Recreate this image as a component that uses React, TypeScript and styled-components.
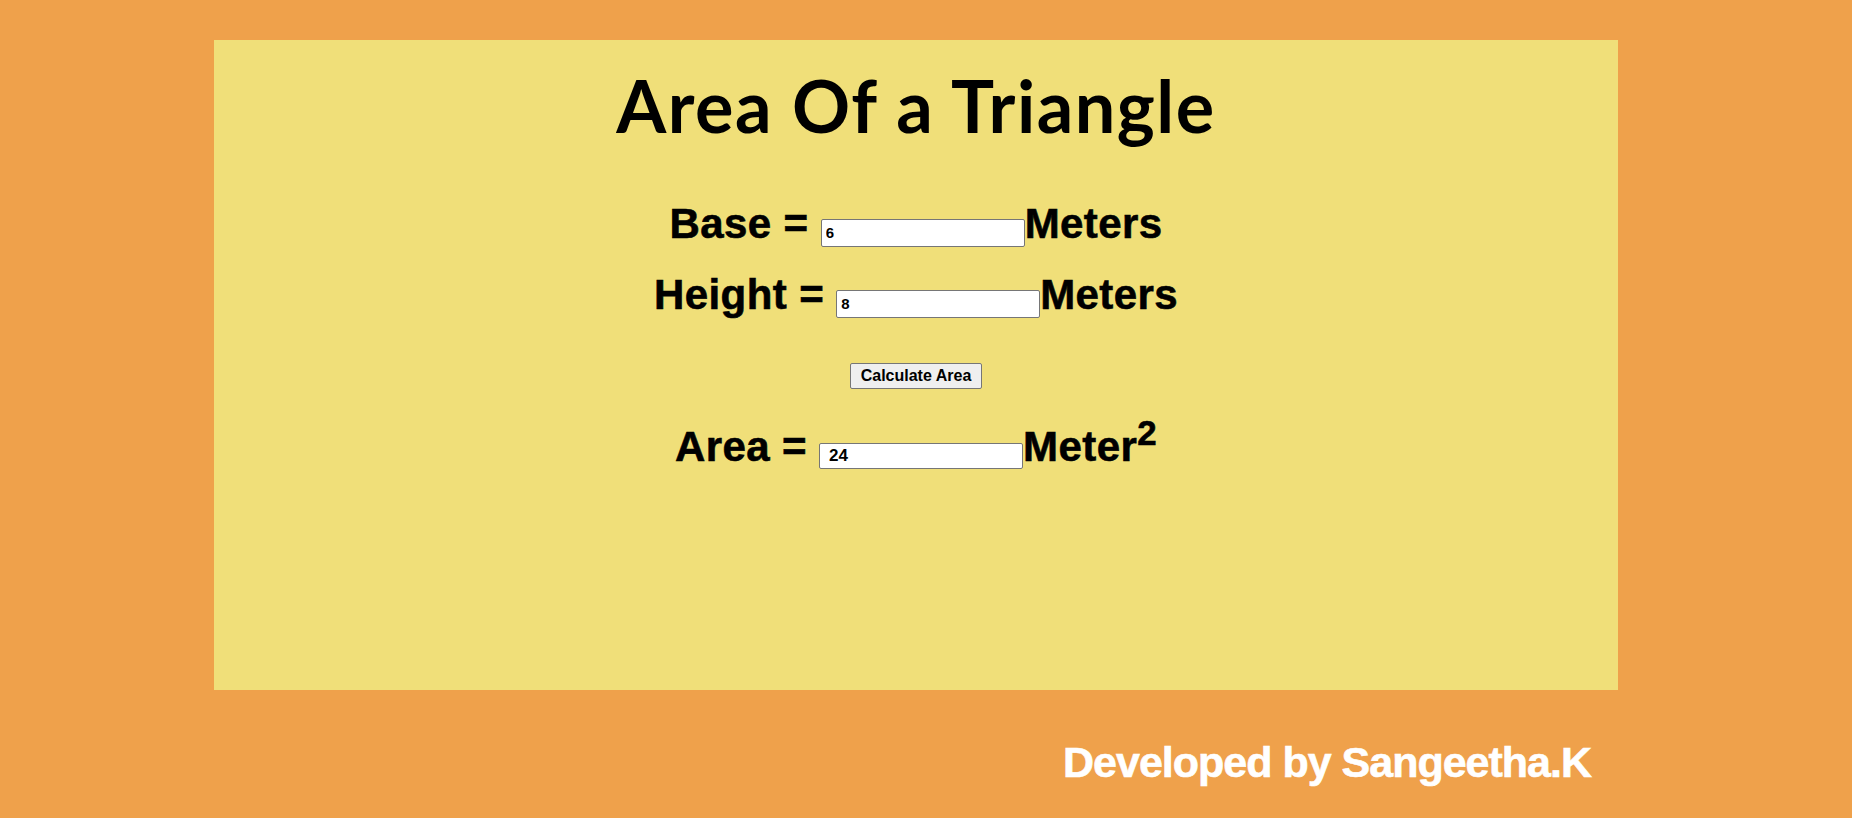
import React from "react";
import styled, { createGlobalStyle } from "styled-components";

const GlobalStyle = createGlobalStyle`
  html, body {
    margin: 0;
    padding: 0;
    background: #efa14b;
  }
  body {
    width: 1852px;
    height: 818px;
    overflow: hidden;
  }
`;

const Page = styled.div`
  box-sizing: border-box;
  height: 818px;
  padding: 40px 234px 0 214px;
  background: #efa14b;
  display: flex;
  flex-direction: column;
`;

const Panel = styled.main`
  box-sizing: border-box;
  height: 650px;
  padding-top: 22px;
  background: #f0df79;
  text-align: center;
  color: #000;
`;

const Title = styled.h1`
  margin: 0 0 52px;
  font-family: "Lato", "Open Sans", sans-serif;
  font-weight: 700;
  font-size: 72px;
  line-height: 86px;
  letter-spacing: 1.5px;
`;

const Row = styled.div<{ $gap: number }>`
  margin: 0 0 ${(p) => p.$gap}px;
  font-family: "Liberation Sans", Arial, sans-serif;
  font-weight: 700;
  font-size: 42px;
  line-height: 48px;
  letter-spacing: 0.4px;
  -webkit-text-stroke: 0.6px #000;
  white-space: nowrap;
`;

const Field = styled.input<{ $size: number; $pad: number; $h: number }>`
  box-sizing: border-box;
  width: 204px;
  height: ${(p) => p.$h}px;
  padding: 0 2px 0 ${(p) => p.$pad}px;
  margin: 0;
  border: 1px solid #767676;
  border-radius: 2px;
  background: #fff;
  color: #000;
  font-family: "Liberation Sans", Arial, sans-serif;
  font-weight: 700;
  font-size: ${(p) => p.$size}px;
  letter-spacing: 0;
  -webkit-text-stroke: 0;
  vertical-align: baseline;
  outline: none;
`;

const Button = styled.button`
  display: block;
  box-sizing: border-box;
  height: 26px;
  margin: 44px auto 34px;
  padding: 0 10px;
  border: 1px solid #767676;
  border-radius: 2px;
  background: #efefef;
  color: #000;
  font-family: "Liberation Sans", Arial, sans-serif;
  font-weight: 700;
  font-size: 16px;
  line-height: 24px;
  cursor: pointer;
`;

const Sup = styled.sup`
  font-size: 0.83em;
  line-height: 0;
  vertical-align: 16px;
`;

const Footer = styled.footer`
  margin-top: 49px;
  padding-right: 27px;
  text-align: right;
  font-family: "Liberation Sans", Arial, sans-serif;
  font-weight: 700;
  font-size: 43px;
  line-height: 47px;
  letter-spacing: -1px;
  -webkit-text-stroke: 0.6px #fff;
  color: #fff;
  white-space: nowrap;
`;

export default function App() {
  const [base, setBase] = React.useState("6");
  const [height, setHeight] = React.useState("8");
  const [area, setArea] = React.useState("24");

  const calculate = () => {
    const b = parseFloat(base);
    const h = parseFloat(height);
    if (!isNaN(b) && !isNaN(h)) setArea(String((b * h) / 2));
  };

  return (
    <>
      <GlobalStyle />
      <Page>
        <Panel>
          <Title>Area Of a Triangle</Title>
          <Row $gap={23}>
            Base ={" "}
            <Field $size={15} $pad={4} $h={28} value={base} onChange={(e) => setBase(e.target.value)} />
            Meters
          </Row>
          <Row $gap={0}>
            Height ={" "}
            <Field $size={15} $pad={4} $h={28} value={height} onChange={(e) => setHeight(e.target.value)} />
            Meters
          </Row>
          <Button onClick={calculate}>Calculate Area</Button>
          <Row $gap={0}>
            Area ={" "}
            <Field $size={17} $pad={9} $h={26} value={area} readOnly />
            Meter<Sup>2</Sup>
          </Row>
        </Panel>
        <Footer>Developed by Sangeetha.K</Footer>
      </Page>
    </>
  );
}
